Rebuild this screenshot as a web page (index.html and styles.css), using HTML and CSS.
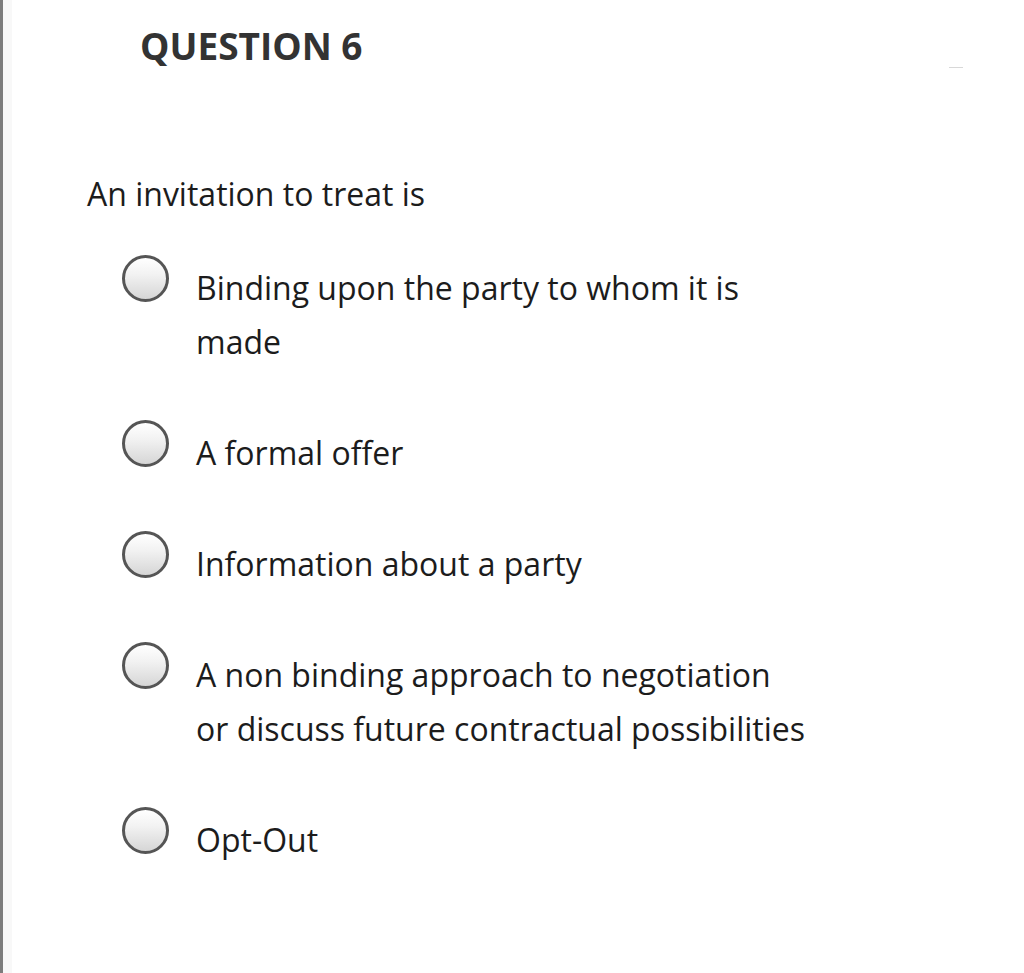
FILE: index.html
```html
<!DOCTYPE html>
<html>
<head>
<meta charset="utf-8">
<link rel="stylesheet" href="styles.css">
</head>
<body>
<div class="page">
  <div class="sheet">
    <div class="title-row">
      <h1 class="title">QUESTION 6</h1>
      <span class="dash"></span>
    </div>
    <p class="question">An invitation to treat is</p>
    <ul class="options">
      <li class="option"><span class="radio"></span><span class="label">Binding upon the party to whom it is<br>made</span></li>
      <li class="option"><span class="radio"></span><span class="label">A formal offer</span></li>
      <li class="option"><span class="radio"></span><span class="label">Information about a party</span></li>
      <li class="option"><span class="radio"></span><span class="label">A non binding approach to negotiation<br>or discuss future contractual possibilities</span></li>
      <li class="option"><span class="radio"></span><span class="label">Opt-Out</span></li>
    </ul>
  </div>
</div>
</body>
</html>
```
FILE: styles.css
```css
html, body {
  margin: 0;
  padding: 0;
  background: #fff;
}
body {
  font-family: "Open Sans", "Noto Sans", sans-serif;
  color: #1c1c1c;
}
.page {
  border-left: 3px solid #7c7c7c;
  min-height: 973px;
  box-sizing: border-box;
}
.sheet {
  border-left: 9px solid #f8f8f8;
  min-height: 973px;
  box-sizing: border-box;
  padding-top: 24px;
}
.title-row {
  display: flex;
  justify-content: space-between;
  align-items: flex-end;
  padding-left: 128px;
  padding-right: 61px;
}
.title {
  margin: 0;
  font-size: 37px;
  line-height: 44px;
  font-weight: 700;
  color: #333;
}
.dash {
  width: 14px;
  height: 1px;
  background: #d8d8d8;
  margin-bottom: 0;
}
.question {
  margin: 106px 0 0 75px;
  font-size: 32px;
  line-height: 40px;
}
.options {
  list-style: none;
  margin: 47px 0 0 110px;
  padding: 0;
  display: flex;
  flex-direction: column;
  gap: 57px;
}
.option {
  display: flex;
  align-items: flex-start;
  gap: 27px;
}
.radio {
  flex: none;
  width: 47px;
  height: 47px;
  box-sizing: border-box;
  border-radius: 50%;
  border: 3px solid #555;
  background: linear-gradient(#ffffff, #f2f2f2 40%, #d6d6d6);
  margin-top: -6px;
}
.label {
  font-size: 32px;
  line-height: 54px;
  color: #1c1c1c;
}
```
